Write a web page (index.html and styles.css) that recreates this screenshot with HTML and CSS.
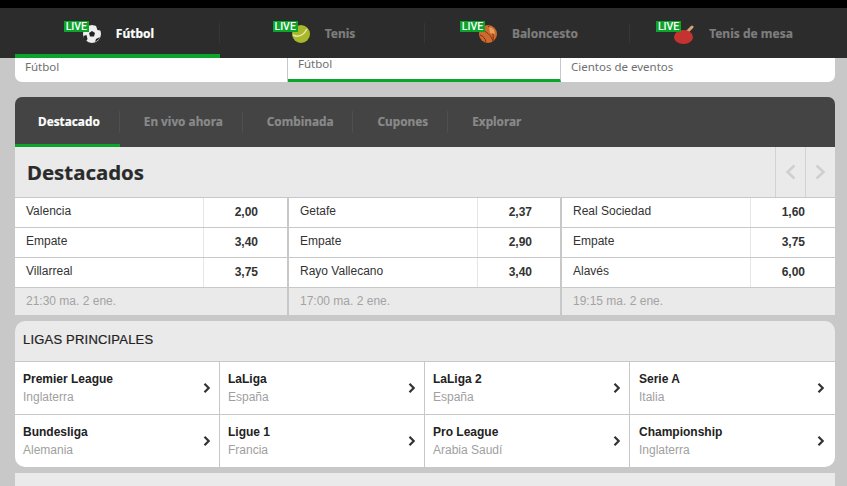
FILE: index.html
```html
<!DOCTYPE html>
<html lang="es">
<head>
<meta charset="utf-8">
<title>Destacados</title>
<link rel="stylesheet" href="styles.css">
</head>
<body>
<div class="topline"></div>
<nav class="sports">
  <a class="sport active"><span class="sport-icon"><span class="live">LIVE</span>
    <svg viewBox="0 0 18 18" width="18" height="18"><circle cx="9" cy="9" r="9" fill="#eee"/><path d="M9 6l3 2-1 3.500H7L6 8z" fill="#222"/><path d="M0.500 11l3-1 1 4-1.500 2.500A9 9 0 0 1 0.500 11zM13 1l1.500 4 3 .5A9 9 0 0 0 13 1zM12 17l1-3 4-2a9 9 0 0 1-5 5zM3 2.500L6 3 6 .6A9 9 0 0 0 3 2.500z" fill="#222"/></svg></span>Fútbol</a>
  <a class="sport"><span class="sport-icon"><span class="live">LIVE</span>
    <svg viewBox="0 0 18 18" width="18" height="18"><circle cx="9" cy="9" r="9" fill="#a9b72a"/><path d="M1 10c5 2.500 10 1 14-6" fill="none" stroke="#e4e9b0" stroke-width="1.500"/></svg></span>Tenis</a>
  <a class="sport"><span class="sport-icon"><span class="live">LIVE</span>
    <svg viewBox="0 0 18 18" width="18" height="18"><circle cx="9" cy="9" r="9" fill="#cf6a2c"/><path d="M9 1c4 3 6 8 5 15M2 5c5 1 10 5 12 11M1 10c3 1 5 3 6 7" fill="none" stroke="#7a3416" stroke-width="1"/><path d="M10 2a7 7 0 0 1 6 7l-5-1z" fill="#e3a15f"/></svg></span>Baloncesto</a>
  <a class="sport"><span class="sport-icon paddle"><span class="live">LIVE</span>
    <svg viewBox="0 0 20 20" width="20" height="20"><path d="M12 8l6-6" stroke="#d9a273" stroke-width="3" stroke-linecap="round"/><ellipse cx="9.500" cy="12" rx="9.500" ry="7" fill="#c4332f"/></svg></span>Tenis de mesa</a>
</nav>

<main class="page">
  <section class="strip">
    <div class="strip-cell">Fútbol</div>
    <div class="strip-cell selected">Fútbol</div>
    <div class="strip-cell">Cientos de eventos</div>
  </section>

  <section class="panel">
    <div class="tabs">
      <a class="tab active">Destacado</a>
      <a class="tab">En vivo ahora</a>
      <a class="tab">Combinada</a>
      <a class="tab">Cupones</a>
      <a class="tab last">Explorar</a>
    </div>
    <header class="featured-head">
      <h1>Destacados</h1>
      <div class="pager">
        <span class="page-btn"><svg viewBox="0 0 12 16" width="12" height="16"><path d="M9.500 1.500L2.500 8l7 6.500" fill="none" stroke="#cfcfcf" stroke-width="2.500"/></svg></span>
        <span class="page-btn"><svg viewBox="0 0 12 16" width="12" height="16"><path d="M1.500 1.500L8.500 8l-7 6.500" fill="none" stroke="#cfcfcf" stroke-width="2.500"/></svg></span>
      </div>
    </header>
    <div class="matches">
      <div class="match">
        <div class="row"><span class="team">Valencia</span><span class="odds">2,00</span></div>
        <div class="row"><span class="team">Empate</span><span class="odds">3,40</span></div>
        <div class="row"><span class="team">Villarreal</span><span class="odds">3,75</span></div>
        <div class="when">21:30 ma. 2 ene.</div>
      </div>
      <div class="match">
        <div class="row"><span class="team">Getafe</span><span class="odds">2,37</span></div>
        <div class="row"><span class="team">Empate</span><span class="odds">2,90</span></div>
        <div class="row"><span class="team">Rayo Vallecano</span><span class="odds">3,40</span></div>
        <div class="when">17:00 ma. 2 ene.</div>
      </div>
      <div class="match">
        <div class="row"><span class="team">Real Sociedad</span><span class="odds">1,60</span></div>
        <div class="row"><span class="team">Empate</span><span class="odds">3,75</span></div>
        <div class="row"><span class="team">Alavés</span><span class="odds">6,00</span></div>
        <div class="when">19:15 ma. 2 ene.</div>
      </div>
    </div>
  </section>

  <section class="leagues">
    <h2>LIGAS PRINCIPALES</h2>
    <div class="league-grid">
      <a class="league"><span class="league-text"><b>Premier League</b><small>Inglaterra</small></span><svg class="chev" viewBox="0 0 8 12" width="8" height="12"><path d="M1.500 1.800L5.700 6 1.500 10.200" fill="none" stroke="#333" stroke-width="2.200"/></svg></a>
      <a class="league"><span class="league-text"><b>LaLiga</b><small>España</small></span><svg class="chev" viewBox="0 0 8 12" width="8" height="12"><path d="M1.500 1.800L5.700 6 1.500 10.200" fill="none" stroke="#333" stroke-width="2.200"/></svg></a>
      <a class="league"><span class="league-text"><b>LaLiga 2</b><small>España</small></span><svg class="chev" viewBox="0 0 8 12" width="8" height="12"><path d="M1.500 1.800L5.700 6 1.500 10.200" fill="none" stroke="#333" stroke-width="2.200"/></svg></a>
      <a class="league"><span class="league-text"><b>Serie A</b><small>Italia</small></span><svg class="chev" viewBox="0 0 8 12" width="8" height="12"><path d="M1.500 1.800L5.700 6 1.500 10.200" fill="none" stroke="#333" stroke-width="2.200"/></svg></a>
      <a class="league"><span class="league-text"><b>Bundesliga</b><small>Alemania</small></span><svg class="chev" viewBox="0 0 8 12" width="8" height="12"><path d="M1.500 1.800L5.700 6 1.500 10.200" fill="none" stroke="#333" stroke-width="2.200"/></svg></a>
      <a class="league"><span class="league-text"><b>Ligue 1</b><small>Francia</small></span><svg class="chev" viewBox="0 0 8 12" width="8" height="12"><path d="M1.500 1.800L5.700 6 1.500 10.200" fill="none" stroke="#333" stroke-width="2.200"/></svg></a>
      <a class="league"><span class="league-text"><b>Pro League</b><small>Arabia Saudí</small></span><svg class="chev" viewBox="0 0 8 12" width="8" height="12"><path d="M1.500 1.800L5.700 6 1.500 10.200" fill="none" stroke="#333" stroke-width="2.200"/></svg></a>
      <a class="league"><span class="league-text"><b>Championship</b><small>Inglaterra</small></span><svg class="chev" viewBox="0 0 8 12" width="8" height="12"><path d="M1.500 1.800L5.700 6 1.500 10.200" fill="none" stroke="#333" stroke-width="2.200"/></svg></a>
    </div>
  </section>

  <section class="next-panel"></section>
</main>
</body>
</html>
```
FILE: styles.css
```css
* { box-sizing: border-box; }
html, body { margin: 0; height: 100%; overflow: hidden; }
body {
  background: #c8c8c8;
  font-family: "Liberation Sans", Arial, sans-serif;
  color: #222;
}
.topline { height: 8px; background: #000; }

.sports {
  display: flex;
  height: 50px;
  padding: 0 12px 0 15px;
  background: #2c2c2c;
}
.sport {
  flex: 0 0 205px;
  display: flex;
  align-items: center;
  justify-content: center;
  gap: 15px;
  padding: 1px 0 0 2px;
  position: relative;
  font: 700 12px "Noto Sans", sans-serif;
  -webkit-text-stroke: 0.2px currentColor;
  color: #7e7e7e;
}
.sport::after {
  content: "";
  position: absolute;
  right: 0;
  top: 15px;
  height: 20px;
  width: 1px;
  background: #363636;
}
.sport:last-child::after { display: none; }
.sport.active { color: #fff; box-shadow: inset 0 -4px 0 #0ba52c; }
.sport-icon { position: relative; display: block; width: 18px; height: 18px; }
.sport-icon.paddle { width: 20px; }
.sport-icon svg { display: block; }
.live {
  position: absolute;
  left: -19px;
  top: -4px;
  width: 25px;
  height: 11px;
  background: #0ba52c;
  color: #fff;
  font: 500 10.500px/11px Roboto, sans-serif;
  -webkit-text-stroke: 0;
  text-align: center;
  z-index: 1;
}
.paddle .live { left: -18px; }

.page { padding: 0 12px 0 15px; }

.strip {
  display: grid;
  grid-template-columns: 273px 273px 274px;
  height: 24px;
  background: #fff;
  border-radius: 0 0 7px 7px;
  font: 400 11.500px "Noto Sans", sans-serif;
  color: #6f6f6f;
}
.strip-cell { padding: 1px 10px 0; line-height: 16px; border-right: 1px solid #c8c8c8; }
.strip-cell:last-child { border-right: 0; }
.strip-cell.selected { padding-top: 0; line-height: 12px; border-bottom: 3px solid #0ba52c; }

.panel { margin-top: 15px; }
.tabs {
  display: flex;
  height: 50px;
  background: #444;
  border-radius: 7px 7px 0 0;
  overflow: hidden;
}
.tab {
  display: flex;
  align-items: center;
  padding: 0 20px 3px 24px;
  position: relative;
  font: 700 11.800px "Noto Sans", sans-serif;
  -webkit-text-stroke: 0.2px currentColor;
  color: #8a8a8a;
}
.tab::after {
  content: "";
  position: absolute;
  right: 0;
  top: 14px;
  height: 22px;
  width: 1px;
  background: #4f4f4f;
}
.tab.last::after { display: none; }
.tab.active { color: #fff; padding-left: 23px; box-shadow: inset 0 -3px 0 #0ba52c; }

.featured-head {
  display: flex;
  justify-content: space-between;
  height: 51px;
  background: #eaeaea;
  border-bottom: 1px solid #c8c8c8;
}
.featured-head h1 {
  margin: 0;
  padding-left: 12px;
  font: 700 20.400px/51px "Noto Sans", sans-serif;
  -webkit-text-stroke: 0.2px currentColor;
  color: #2b2b2b;
}
.pager { display: flex; }
.page-btn {
  width: 30px;
  display: flex;
  align-items: center;
  justify-content: center;
  border-left: 1px solid #d2d2d2;
}

.matches {
  display: grid;
  grid-template-columns: 272px 271px 1fr;
  column-gap: 2px;
}
.row {
  display: flex;
  height: 30px;
  background: #fff;
  border-bottom: 1px solid #c8c8c8;
  font-size: 12px;
}
.team { flex: 1; padding: 6px 11px 0; color: #333; line-height: 15px; }
.odds {
  flex: 0 0 84px;
  border-left: 1px solid #e6e6e6;
  padding-right: 29px;
  text-align: right;
  font-weight: 700;
  line-height: 28px;
  color: #333;
}
.match:nth-child(2) .odds { flex-basis: 83px; padding-right: 28px; }
.match:nth-child(3) .odds { flex-basis: 85px; padding-right: 30px; }
.when {
  height: 27px;
  padding: 0 11px;
  background: #eaeaea;
  color: #a3a3a3;
  font-size: 12px;
  line-height: 27px;
}

.leagues {
  margin-top: 6px;
  border-radius: 10px;
  overflow: hidden;
}
.leagues h2 {
  margin: 0;
  height: 41px;
  padding-left: 8px;
  background: #eaeaea;
  border-bottom: 1px solid #c8c8c8;
  font-size: 13px;
  font-weight: 400;
  letter-spacing: 0.2px;
  line-height: 38px;
  color: #222;
  -webkit-text-stroke: 0.2px currentColor;
}
.league-grid {
  display: grid;
  grid-template-columns: repeat(4, 1fr);
  grid-template-rows: 53px 52px;
  background: #fff;
}
.league {
  display: flex;
  align-items: center;
  justify-content: space-between;
  padding: 0 8px 0 8px;
  border-right: 1px solid #c8c8c8;
  border-bottom: 1px solid #c8c8c8;
}
.league:nth-child(4n) { border-right: 0; padding: 0 10px 0 9px; }
.league:nth-child(n+5) { border-bottom: 0; }
.league-text { display: flex; flex-direction: column; }
.league-text b { font-size: 12px; line-height: 17px; color: #222; }
.league-text small { font-size: 12px; line-height: 18px; color: #a0a0a0; }
.chev { flex: none; }

.next-panel {
  margin-top: 6px;
  height: 13px;
  background: #eaeaea;
}
```
